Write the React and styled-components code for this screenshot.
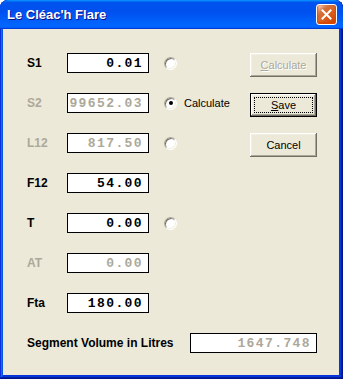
import { Fragment } from "react";
import styled, { createGlobalStyle } from "styled-components";

const GlobalStyle = createGlobalStyle`
  html, body {
    margin: 0;
    padding: 0;
    background: #ffffff;
  }
  body {
    font-family: "Liberation Sans", Arial, sans-serif;
  }
`;

const Window = styled.div`
  width: 343px;
  height: 379px;
  display: flex;
  flex-direction: column;
  background: #0831d9;
  border-radius: 8px 8px 0 0;
  overflow: hidden;
  box-shadow: inset -1px -1px #00138c, inset 1px 1px #0831d9,
    inset -2px -2px #001ea0, inset 2px 2px #166aee, inset -3px -3px #003bda,
    inset 3px 3px #0855dd;
`;

const TitleBar = styled.div`
  height: 29px;
  flex: none;
  display: flex;
  align-items: center;
  justify-content: space-between;
  padding: 0 6px 0 7px;
  background: linear-gradient(
    180deg,
    #0997ff 0%,
    #0053ee 8%,
    #0050ee 40%,
    #0066ff 88%,
    #0066ff 93%,
    #005bff 95%,
    #003dd7 96%,
    #003dd7 100%
  );
  border-radius: 8px 8px 0 0;
`;

const Title = styled.span`
  color: #ffffff;
  font-size: 13px;
  font-weight: bold;
  text-shadow: 1px 1px #0f1089;
`;

const CloseButton = styled.div`
  width: 21px;
  height: 21px;
  box-sizing: border-box;
  border: 1px solid #ffffff;
  border-radius: 3px;
  display: flex;
  align-items: center;
  justify-content: center;
  background: radial-gradient(
    circle at 90% 90%,
    #cc4600 0,
    #dc6527 55%,
    #cd7546 70%,
    #ffccb2 90%,
    #ffffff 100%
  );
  box-shadow: inset 0 -1px 2px 1px #da4600;
`;

const Client = styled.div`
  flex: 1;
  margin: 0 4px 4px 3px;
  background: #ece9d8;
  padding: 24px 0 0 24px;
  display: flex;
  flex-direction: column;
  gap: 20px;
`;

const Top = styled.div`
  display: flex;
`;

const Fields = styled.div`
  width: 223px;
  display: grid;
  grid-template-columns: 40px 82px auto;
  grid-auto-rows: 20px;
  row-gap: 20px;
  align-items: center;
`;

const Label = styled.span`
  font-size: 12px;
  font-weight: bold;
  color: ${(p) => (p.$disabled ? "#aca899" : "#000000")};
`;

const Box = styled.div`
  height: 20px;
  box-sizing: border-box;
  border: 1px solid #000000;
  background: #ffffff;
  display: flex;
  align-items: center;
  justify-content: flex-end;
  padding-right: 5px;
  font-family: "Liberation Mono", "DejaVu Sans Mono", monospace;
  font-weight: bold;
  font-size: 13px;
  letter-spacing: 1.4px;
  color: ${(p) => (p.$disabled ? "#aca899" : "#000000")};
  width: ${(p) => p.$width || "82px"};
`;

const RadioWrap = styled.label`
  display: flex;
  align-items: center;
  gap: 7px;
  margin-left: 15px;
  font-size: 11px;
  color: #000000;
`;

const Radio = styled.span`
  width: 13px;
  height: 13px;
  box-sizing: border-box;
  border-radius: 50%;
  border: 1px solid;
  border-color: #aca899 #ffffff #ffffff #aca899;
  background: #ffffff;
  box-shadow: inset 1px 1px #716f64, inset -1px -1px #f1efe2;
  display: flex;
  align-items: center;
  justify-content: center;

  &::after {
    content: "";
    width: 4px;
    height: 4px;
    border-radius: 50%;
    background: ${(p) => (p.$checked ? "#000000" : "transparent")};
  }
`;

const Buttons = styled.div`
  display: flex;
  flex-direction: column;
  gap: 16px;
`;

const Button = styled.div`
  width: 67px;
  height: 24px;
  box-sizing: border-box;
  display: flex;
  align-items: center;
  justify-content: center;
  background: #ece9d8;
  font-size: 11px;
  position: relative;
  color: ${(p) => (p.$disabled ? "#aca899" : "#000000")};
  text-shadow: ${(p) => (p.$disabled ? "1px 1px #ffffff" : "none")};
  border: ${(p) => (p.$default ? "1px solid #000000" : "none")};
  box-shadow: inset -1px -1px #716f64, inset 1px 1px #ffffff,
    inset -2px -2px #aca899, inset 2px 2px #f1efe2;

  u {
    text-decoration: underline;
  }

  &::after {
    content: "";
    display: ${(p) => (p.$default ? "block" : "none")};
    position: absolute;
    inset: 3px;
    border: 1px dotted #000000;
  }
`;

const VolumeRow = styled.div`
  display: flex;
  align-items: center;
  justify-content: space-between;
  width: 290px;
`;

const rows = [
  { label: "S1", value: "0.01", radio: true },
  { label: "S2", value: "99652.03", disabled: true, radio: true, checked: true },
  { label: "L12", value: "817.50", disabled: true, radio: true },
  { label: "F12", value: "54.00" },
  { label: "T", value: "0.00", radio: true },
  { label: "AT", value: "0.00", disabled: true },
  { label: "Fta", value: "180.00" },
];

export default function App() {
  return (
    <>
      <GlobalStyle />
      <Window>
        <TitleBar>
          <Title>Le Cléac'h Flare</Title>
          <CloseButton>
            <svg width="11" height="11" viewBox="0 0 11 11">
              <path
                d="M1.5 1.5 L9.5 9.5 M9.5 1.5 L1.5 9.5"
                stroke="#ffffff"
                strokeWidth="2"
                strokeLinecap="square"
              />
            </svg>
          </CloseButton>
        </TitleBar>
        <Client>
          <Top>
            <Fields>
              {rows.map((r) => (
                <Fragment key={r.label}>
                  <Label $disabled={r.disabled}>{r.label}</Label>
                  <Box $disabled={r.disabled}>{r.value}</Box>
                  {r.radio ? (
                    <RadioWrap>
                      <Radio $checked={r.checked} />
                      {r.checked ? "Calculate" : null}
                    </RadioWrap>
                  ) : (
                    <span />
                  )}
                </Fragment>
              ))}
            </Fields>
            <Buttons>
              <Button $disabled>
                <span>
                  <u>C</u>alculate
                </span>
              </Button>
              <Button $default>
                <span>
                  <u>S</u>ave
                </span>
              </Button>
              <Button>Cancel</Button>
            </Buttons>
          </Top>
          <VolumeRow>
            <Label>Segment Volume in Litres</Label>
            <Box $disabled $width="127px">
              1647.748
            </Box>
          </VolumeRow>
        </Client>
      </Window>
    </>
  );
}
